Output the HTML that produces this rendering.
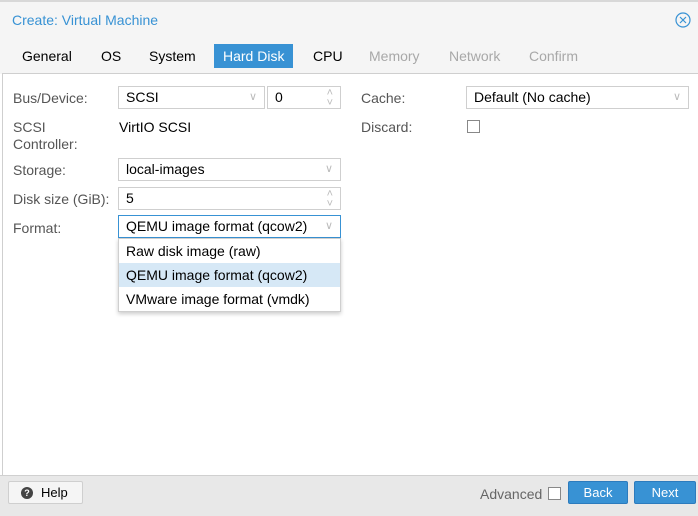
<!DOCTYPE html>
<html><head><style>
*{box-sizing:border-box;margin:0;padding:0}
body{width:698px;height:516px;background:#fff;font-family:"Liberation Sans",sans-serif;font-size:13px;color:#000;position:relative;overflow:hidden}
.a{position:absolute;white-space:nowrap}
.hdr{left:0;top:0;width:698px;height:74px;background:#f5f5f5;border-top:2px solid #d8d8d8}
.title{left:12px;top:12px;color:#3892d4;font-size:14px}
.tab{top:44px;height:24px;line-height:24px;font-size:14px;padding:0 9px;color:#000}
.tab.d{color:#a8a8a8}
.tab.on{background:#3892d4;color:#fff}
.content{left:2px;top:73px;width:696px;height:402px;border-top:1px solid #cfcfcf;border-left:1px solid #cfcfcf;background:#fff}
.lbl{color:#555;font-size:14px}
.fld{border:1px solid #cfcfcf;height:23px;line-height:21px;padding-left:7px;font-size:14px;background:#fff}
.arr{position:absolute;right:7px;top:0;color:#bbb;font-size:11px}
.foot{left:0;top:475px;width:698px;height:41px;background:#e8e8e8;border-top:1px solid #d0d0d0}
.btn{height:23px;line-height:21px;text-align:center;font-size:13px;border-radius:2px}
.item{left:119px;width:221px;height:24px;line-height:24px;padding-left:7px;font-size:14px}
</style></head><body>
<div class="a hdr"></div>
<div class="a title">Create: Virtual Machine</div>
<svg class="a" style="left:675px;top:12px" width="16" height="16"><circle cx="8" cy="8" r="7" fill="none" stroke="#3892d4" stroke-width="1.2"/><path d="M5 5L11 11M11 5L5 11" stroke="#3892d4" stroke-width="1.2"/></svg>
<div class="a tab" style="left:13px">General</div>
<div class="a tab" style="left:92px">OS</div>
<div class="a tab" style="left:140px">System</div>
<div class="a tab on" style="left:214px;width:79px">Hard Disk</div>
<div class="a tab" style="left:304px">CPU</div>
<div class="a tab d" style="left:360px">Memory</div>
<div class="a tab d" style="left:440px">Network</div>
<div class="a tab d" style="left:520px">Confirm</div>
<div class="a content"></div>

<div class="a lbl" style="left:13px;top:90px">Bus/Device:</div>
<div class="a fld" style="left:118px;top:86px;width:147px">SCSI<span class="arr">&#8744;</span></div>
<div class="a fld" style="left:267px;top:86px;width:74px">0<span class="arr" style="line-height:10px;top:1px">&#708;<br>&#709;</span></div>
<div class="a lbl" style="left:13px;top:119px;line-height:17px">SCSI<br>Controller:</div>
<div class="a" style="left:119px;top:119px;font-size:14px">VirtIO SCSI</div>
<div class="a lbl" style="left:361px;top:90px">Cache:</div>
<div class="a fld" style="left:466px;top:86px;width:223px">Default (No cache)<span class="arr">&#8744;</span></div>
<div class="a lbl" style="left:361px;top:119px">Discard:</div>
<div class="a" style="left:467px;top:120px;width:13px;height:13px;border:1px solid #888"></div>

<div class="a lbl" style="left:13px;top:162px">Storage:</div>
<div class="a fld" style="left:118px;top:158px;width:223px">local-images<span class="arr">&#8744;</span></div>
<div class="a lbl" style="left:13px;top:191px">Disk size (GiB):</div>
<div class="a fld" style="left:118px;top:187px;width:223px">5<span class="arr" style="line-height:10px;top:1px">&#708;<br>&#709;</span></div>
<div class="a lbl" style="left:13px;top:220px">Format:</div>
<div class="a fld" style="left:118px;top:215px;width:223px;border-color:#3892d4">QEMU image format (qcow2)<span class="arr">&#8744;</span></div>
<div class="a" style="left:118px;top:238px;width:223px;height:74px;border:1px solid #cfcfcf;background:#fff;box-shadow:0 2px 4px rgba(0,0,0,.2)"></div>
<div class="a item" style="top:239px">Raw disk image (raw)</div>
<div class="a item" style="top:263px;background:#d6e8f6">QEMU image format (qcow2)</div>
<div class="a item" style="top:287px">VMware image format (vmdk)</div>

<div class="a foot"></div>
<div class="a btn" style="left:8px;top:481px;width:75px;background:#f5f5f5;border:1px solid #cfcfcf;text-align:left;padding-left:32px;line-height:22px">Help</div>
<div class="a" style="left:21px;top:487px;width:12px;height:12px;border-radius:50%;background:#444;color:#fff;font-size:9px;font-weight:bold;text-align:center;line-height:12px">?</div>
<div class="a" style="left:480px;top:486px;color:#666;font-size:14px">Advanced</div>
<div class="a" style="left:548px;top:487px;width:13px;height:13px;border:1px solid #888;background:#fff"></div>
<div class="a btn" style="left:568px;top:481px;width:60px;background:#3892d4;color:#fff;border:1px solid #2c7bbd;line-height:22px">Back</div>
<div class="a btn" style="left:634px;top:481px;width:62px;background:#3892d4;color:#fff;border:1px solid #2c7bbd;line-height:22px">Next</div>
</body></html>
